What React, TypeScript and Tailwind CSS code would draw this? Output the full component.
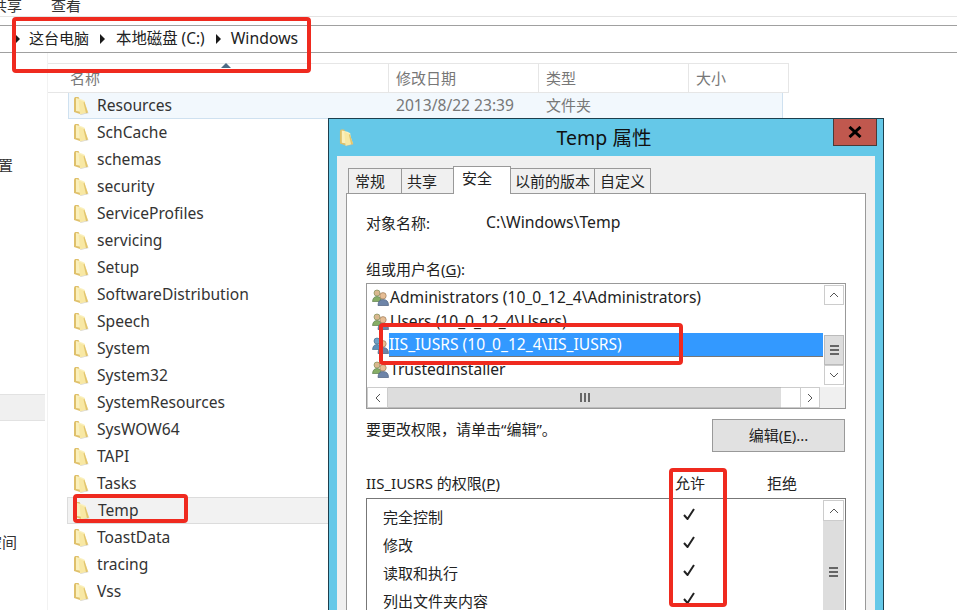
import React from 'react';

const folders = [
  'Resources', 'SchCache', 'schemas', 'security', 'ServiceProfiles', 'servicing', 'Setup',
  'SoftwareDistribution', 'Speech', 'System', 'System32', 'SystemResources', 'SysWOW64',
  'TAPI', 'Tasks', 'Temp', 'ToastData', 'tracing', 'Vss', '',
];

const perms = ['完全控制', '修改', '读取和执行', '列出文件夹内容'];

function Folder({ className = '' }: { className?: string }) {
  return (
    <svg viewBox="0 0 17 19" className={className}>
      <path d="M1 2.5 L1 16 L7 18 L7 4 L5.5 1 L2 1 Z" fill="#dfc06a" />
      <path d="M3 2 L9 3.5 L12 5 L12 16.5 L3 15 Z" fill="#faf0bd" />
      <path d="M5.5 3.5 L11.5 6 L15 16.5 L7 18.5 Z" fill="#f8e8a4" />
      <path d="M11.5 6 L15 16.5 L13 17.2 L10.5 6.5 Z" fill="#e2c56e" />
      <path d="M7 18.5 L15 16.5 L16 17 L7.5 19 Z" fill="#b9b4a4" opacity="0.6" />
    </svg>
  );
}

function UsersIcon({ className = '', selected = false }: { className?: string; selected?: boolean }) {
  return (
    <svg viewBox="0 0 17 17" className={className}>
      <path d="M0.5 12.5 Q1 7.5 5 7.5 Q9 7.5 9.5 12.5 Z" fill={selected ? '#5d8fb8' : '#86ad66'} stroke={selected ? '#44708f' : '#5d7f4c'} strokeWidth="0.7" />
      <circle cx="5" cy="4" r="3" fill={selected ? '#6f9fc4' : '#d9b88f'} stroke={selected ? '#44708f' : '#7f8f55'} strokeWidth="0.7" />
      <path d="M6 16.5 Q6 10.5 11 10.5 Q16.5 10.5 16.5 16.5 Z" fill="#6d84a8" stroke="#4c5f7d" strokeWidth="0.7" />
      <circle cx="11" cy="6.8" r="3.2" fill="#e6bd94" stroke="#9c7c5c" strokeWidth="0.7" />
    </svg>
  );
}

function Tri() {
  return <span className="block w-0 h-0 border-y-[5px] border-y-transparent border-l-[5px] border-l-[#1a1a1a]" />;
}

function Chevron({ d }: { d: string }) {
  return (
    <svg viewBox="0 0 12 12" className="w-3 h-3">
      <path d={d} fill="none" stroke="#555" strokeWidth="1" />
    </svg>
  );
}

function Grip({ vertical = false }: { vertical?: boolean }) {
  return vertical ? (
    <span className="flex flex-col gap-[2px]">
      <span className="w-[9px] h-[2px] bg-[#666]" />
      <span className="w-[9px] h-[2px] bg-[#666]" />
      <span className="w-[9px] h-[2px] bg-[#666]" />
    </span>
  ) : (
    <span className="flex gap-[2px]">
      <span className="w-[2px] h-[9px] bg-[#666]" />
      <span className="w-[2px] h-[9px] bg-[#666]" />
      <span className="w-[2px] h-[9px] bg-[#666]" />
    </span>
  );
}

function Dialog() {
  return (
    <div className="absolute left-[328px] top-[118px] w-[556px] h-[520px] border border-[#1d3f4d] bg-[#65c8e8] flex flex-col">
      <div className="relative h-[37px] shrink-0 flex items-center justify-center text-[19.5px] text-[#111] pr-[4px]">
        <Folder className="absolute left-[10px] top-[9px] w-[16px] h-[19px]" />
        <span>Temp 属性</span>
        <div className="absolute right-[6px] top-0 w-[44px] h-[27px] bg-[#c0584e] border border-t-0 border-[#4a3a38] flex items-center justify-center">
          <svg viewBox="0 0 14 12" className="w-[14px] h-[12px]">
            <path d="M1.5 1 L12.5 11 M12.5 1 L1.5 11" stroke="#000" strokeWidth="3" />
          </svg>
        </div>
      </div>
      <div className="mx-[8px] flex-1 bg-[#f0f0f0] pt-[12px] px-[9px] flex flex-col min-h-0">
        <div className="flex h-[25px] items-end pl-[2px] text-[#222] relative z-10">
          <span className="h-[25px] w-[54px] -mr-px pl-[6px] border border-b-0 border-[#999] flex items-center">常规</span>
          <span className="h-[25px] w-[53px] pl-[5px] border border-b-0 border-[#999] flex items-center">共享</span>
          <span className="h-[28px] w-[58px] -mb-px -mx-px pl-[8px] border border-b-0 border-[#999] bg-white flex items-center pb-[4px]">安全</span>
          <span className="h-[25px] w-[85px] pl-[4px] border border-b-0 border-[#999] flex items-center whitespace-nowrap">以前的版本</span>
          <span className="h-[25px] w-[57px] -ml-px pl-[5px] border border-b-0 border-[#999] flex items-center whitespace-nowrap">自定义</span>
        </div>
        <div className="flex-1 border border-[#999] bg-white px-[19px] text-[#222]">
          <div className="flex h-[20px] mt-[19px] items-center">
            <span className="w-[120px]">对象名称:</span>
            <span className="text-[15.8px]">C:\Windows\Temp</span>
          </div>
          <div className="mt-[26px] h-[20px] flex items-center">
            <span>组或用户名(<span className="underline">G</span>):</span>
          </div>
          <div className="mt-[4px] h-[126px] border border-[#999] flex flex-col relative">
            <div className="flex flex-1 min-h-0">
              <div className="flex-1 flex flex-col pt-[1px] pl-[5px]">
                {[
                  'Administrators (10_0_12_4\\Administrators)',
                  'Users (10_0_12_4\\Users)',
                  'IIS_IUSRS (10_0_12_4\\IIS_IUSRS)',
                  'TrustedInstaller',
                ].map((name, i) => (
                  <div key={name} className="h-[24px] flex items-center shrink-0 text-[15.6px]">
                    <UsersIcon selected={i === 2} className="w-[17px] h-[17px] shrink-0" />
                    <span className={i === 2 ? 'flex-1 h-[24px] pt-[1px] flex items-center bg-[#3399ff] text-white border-b border-[#777]' : 'ml-[1px] pt-[2px]'}>{name}</span>
                  </div>
                ))}
              </div>
              <div className="w-[22px] flex flex-col border-l border-transparent bg-white">
                <div className="h-[20px] mt-[1px] mr-[1px] border border-[#ccc] flex items-center justify-center"><Chevron d="M2 8 L6 4 L10 8" /></div>
                <div className="h-[30px]" />
                <div className="h-[30px] mr-[1px] bg-[#ddd] border border-[#bbb] flex items-center justify-center"><Grip vertical /></div>
                <div className="h-[20px] mr-[1px] border border-[#ccc] flex items-center justify-center"><Chevron d="M2 4 L6 8 L10 4" /></div>
              </div>
            </div>
            <div className="h-[21px] shrink-0 flex bg-[#f0f0f0]">
              <div className="w-[21px] bg-white border border-[#ccc] flex items-center justify-center"><Chevron d="M8 2 L4 6 L8 10" /></div>
              <div className="w-[393px] bg-[#ddd] border-y border-[#bbb] flex items-center justify-center"><Grip /></div>
              <div className="w-[19px] bg-white border-y border-[#ccc]" />
              <div className="w-[20px] bg-white border border-[#ccc] flex items-center justify-center"><Chevron d="M4 2 L8 6 L4 10" /></div>
            </div>
          </div>
          <div className="mt-[10px] flex items-start justify-between h-[33px]">
            <span className="h-[20px] flex items-center">要更改权限，请单击“编辑”。</span>
            <span className="w-[133px] h-[33px] mr-[1px] bg-[#e1e1e1] border border-[#999] flex items-center justify-center">编辑(<span className="underline">E</span>)...</span>
          </div>
          <div className="mt-[21px] h-[20px] flex items-center">
            <span className="w-[309px]">IIS_IUSRS 的权限(<span className="underline">P</span>)</span>
            <span className="w-[92px]">允许</span>
            <span>拒绝</span>
          </div>
          <div className="mt-[5px] h-[140px] border border-[#777] flex">
            <div className="flex-1 flex flex-col pl-[16px] pt-[4px]">
              {perms.map((p) => (
                <div key={p} className="h-[28px] flex items-center shrink-0">
                  <span className="w-[300px]">{p}</span>
                  <svg viewBox="0 0 12 12" className="w-[12px] h-[12px] -mt-[7px]">
                    <path d="M1 7 L4.5 11 L11 1" fill="none" stroke="#222" strokeWidth="2" />
                  </svg>
                </div>
              ))}
            </div>
            <div className="w-[22px] flex flex-col">
              <div className="h-[21px] mt-[1px] mr-[1px] bg-white border border-[#ccc] flex items-center justify-center"><Chevron d="M2 8 L6 4 L10 8" /></div>
              <div className="flex-1 mr-[1px] bg-[#ddd] flex items-start justify-center pt-[46px]"><Grip vertical /></div>
            </div>
          </div>
        </div>
      </div>
    </div>
  );
}

export default function App() {
  return (
    <div className="relative w-[957px] h-[610px] overflow-hidden bg-white text-[15px] text-[#333] font-['Noto_Sans','Noto_Sans_CJK_SC',sans-serif]">
      {/* ribbon tabs, cut off by the top of the crop */}
      <div className="h-[17px] border-b border-[#e4e4e4] overflow-hidden flex items-end">
        <div className="flex gap-[29px] -ml-[8px] h-[17px] -mt-[16px] items-end text-[#333]">
          <span>共享</span>
          <span>查看</span>
        </div>
      </div>

      {/* address bar */}
      <div className="mt-[8px] h-[28px] border-y border-[#a0a0a0] flex items-center text-[#222] whitespace-nowrap pb-[1px]">
        <span className="ml-[15px]"><Tri /></span>
        <span className="ml-[9px]">这台电脑</span>
        <span className="ml-[11px]"><Tri /></span>
        <span className="ml-[11px] text-[15.4px]">本地磁盘 (C:)</span>
        <span className="ml-[11px]"><Tri /></span>
        <span className="ml-[10px] text-[15.8px]">Windows</span>
      </div>

      <div className="flex h-[557px]">
        {/* navigation pane */}
        <div className="w-[48px] shrink-0 border-r border-[#f2f2f2] overflow-hidden">
          <div className="mt-[100px] h-[24px] -ml-[17px] flex items-center">位置</div>
          <div className="mt-[217px] w-[45px] h-[27px] bg-[#f0f0f0] border-y border-[#e2e2e2]" />
          <div className="mt-[109px] h-[24px] -ml-[13px] flex items-center">空间</div>
        </div>

        {/* file list */}
        <div className="flex-1 pt-[10px] min-w-0">
          <div className="relative w-[741px] h-[30px] border-y border-[#e6e6e6] border-r flex items-center text-[#777]">
            <span className="absolute left-[173px] -top-px w-0 h-0 border-x-[5px] border-x-transparent border-b-[5px] border-b-[#4d6b85]" />
            <span className="w-[341px] pl-[22px] h-full flex items-center border-r border-[#e6e6e6]">名称</span>
            <span className="w-[150px] pl-[7px] h-full flex items-center border-r border-[#e6e6e6]">修改日期</span>
            <span className="w-[150px] pl-[7px] h-full flex items-center border-r border-[#e6e6e6]">类型</span>
            <span className="pl-[7px]">大小</span>
          </div>
          {folders.map((name) => (
            <div
              key={name}
              className={
                name === 'Resources'
                  ? 'h-[27px] w-[715px] ml-[20px] -mt-px pl-[4px] flex items-center bg-[#f2f8fd] border border-[#cfe1f0] text-[#333] text-[15.6px]'
                  : name === 'Temp'
                    ? 'h-[27px] w-[265px] ml-[19px] pl-[6px] flex items-center bg-[#f2f2f2] border border-[#dcdcdc] text-[#333] text-[15.6px]'
                    : 'h-[27px] ml-[20px] pl-[5px] flex items-center text-[#333] text-[15.6px]'
              }
            >
              <Folder className="w-[17px] h-[19px] shrink-0" />
              <span className="ml-[7px]">{name}</span>
              {name === 'Resources' && (
                <>
                  <span className="ml-auto w-[150px] text-[#777]">2013/8/22 23:39</span>
                  <span className="w-[236px] text-[#777] text-[15px]">文件夹</span>
                </>
              )}
            </div>
          ))}
        </div>
      </div>

      <Dialog />

      {/* red annotation boxes */}
      <div className="absolute left-[12px] top-[17px] w-[299px] h-[56px] border-[4px] border-[#ef2a1f] rounded-[4px]" />
      <div className="absolute left-[379px] top-[323px] w-[304px] h-[42px] border-[4px] border-[#ef2a1f] rounded-[4px]" />
      <div className="absolute left-[669px] top-[468px] w-[58px] h-[139px] border-[4px] border-[#ef2a1f] rounded-[4px]" />
      <div className="absolute left-[73px] top-[494px] w-[115px] h-[29px] border-[4px] border-[#ef2a1f] rounded-[4px]" />
    </div>
  );
}
